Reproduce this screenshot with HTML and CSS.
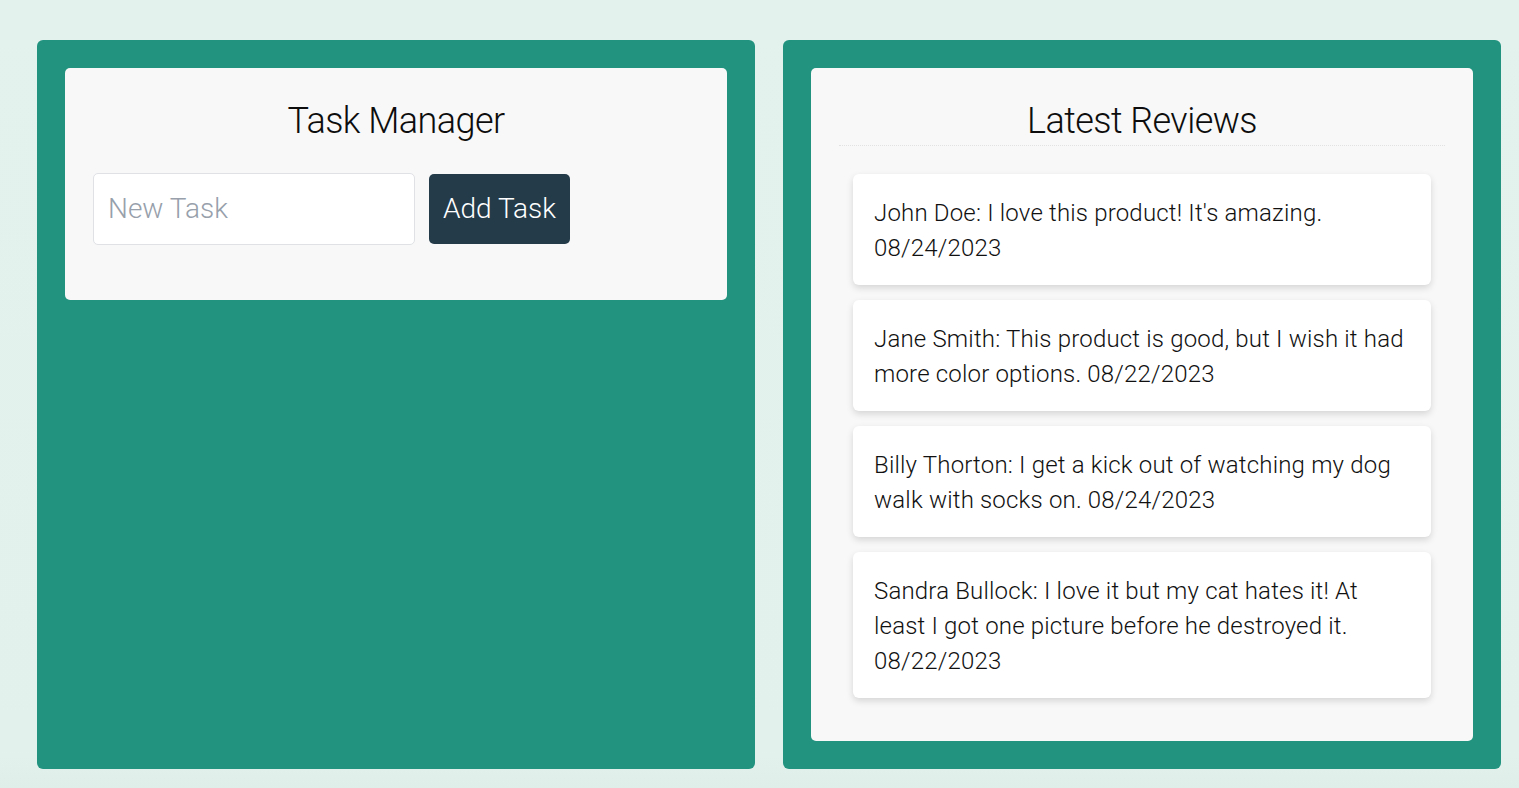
FILE: index.html
```html
<!DOCTYPE html>
<html lang="en">
<head>
<meta charset="utf-8">
<title>Dashboard</title>
<link rel="stylesheet" href="styles.css">
</head>
<body>
<main class="layout">
  <section class="panel">
    <div class="card card-tasks">
      <h2 class="card-title">Task Manager</h2>
      <form class="task-form">
        <input class="task-input" type="text" placeholder="New Task">
        <button class="task-button" type="button">Add Task</button>
      </form>
    </div>
  </section>
  <section class="panel">
    <div class="card card-reviews">
      <h2 class="card-title card-title-ruled">Latest Reviews</h2>
      <ul class="review-list">
        <li class="review">John Doe: I love this product! It's amazing. 08/24/2023</li>
        <li class="review">Jane Smith: This product is good, but I wish it had more color options. 08/22/2023</li>
        <li class="review">Billy Thorton: I get a kick out of watching my dog walk with socks on. 08/24/2023</li>
        <li class="review">Sandra Bullock: I love it but my cat hates it! At least I got one picture before he destroyed it. 08/22/2023</li>
      </ul>
    </div>
  </section>
</main>
</body>
</html>
```

FILE: styles.css
```css
* { box-sizing: border-box; }

html, body {
  margin: 0;
  padding: 0;
}

body {
  font-family: Roboto, "Liberation Sans", sans-serif;
  font-weight: 300;
  color: #111;
  background: linear-gradient(to bottom, #e4f2ee 0%, #e3f1ed 96%, #e0eee9 100%);
  min-height: 788px;
}

.layout {
  display: flex;
  align-items: stretch;
  gap: 28px;
  padding: 40px 18px 19px 37px;
}

.panel {
  flex: 0 0 718px;
  background: #21937f;
  border-radius: 6px;
  padding: 28px;
  display: flex;
  flex-direction: column;
  align-items: stretch;
}

.card {
  background: #f8f8f8;
  border-radius: 5px;
  padding: 32px 28px 28px;
}

.card-tasks {
  align-self: stretch;
  padding-bottom: 55px;
}

.card-title {
  margin: 0;
  font-size: 36px;
  font-weight: 300;
  line-height: 42px;
  letter-spacing: -0.55px;
  text-align: center;
  padding-bottom: 4px;
  color: #0d0d0d;
}

.card-title-ruled {
  padding-bottom: 3px;
  border-bottom: 1px dotted #e2e2e2;
}

.task-form {
  display: flex;
  align-items: center;
  gap: 14px;
  margin-top: 27px;
}

.task-input {
  width: 322px;
  height: 72px;
  border: 1px solid #dfe1e5;
  border-radius: 5px;
  background: #fff;
  padding: 0 14px 2px;
  font-family: inherit;
  font-weight: 300;
  font-size: 28px;
  color: #222;
  outline: none;
}

.task-input::placeholder {
  color: #97a0ab;
}

.task-button {
  height: 70px;
  padding: 0 14px 2px;
  border: none;
  border-radius: 5px;
  background: #243b4a;
  color: #fff;
  font-family: inherit;
  font-weight: 300;
  font-size: 28px;
  cursor: pointer;
}

.review-list {
  list-style: none;
  margin: 28px 14px 0;
  padding: 0 0 15px;
  display: flex;
  flex-direction: column;
  gap: 15px;
}

.review {
  background: #fff;
  border-radius: 6px;
  padding: 22px 21px 19px;
  font-size: 24px;
  line-height: 35px;
  letter-spacing: 0.18px;
  color: #111;
  box-shadow: 0 3px 7px rgba(0, 0, 0, 0.14);
}
```
